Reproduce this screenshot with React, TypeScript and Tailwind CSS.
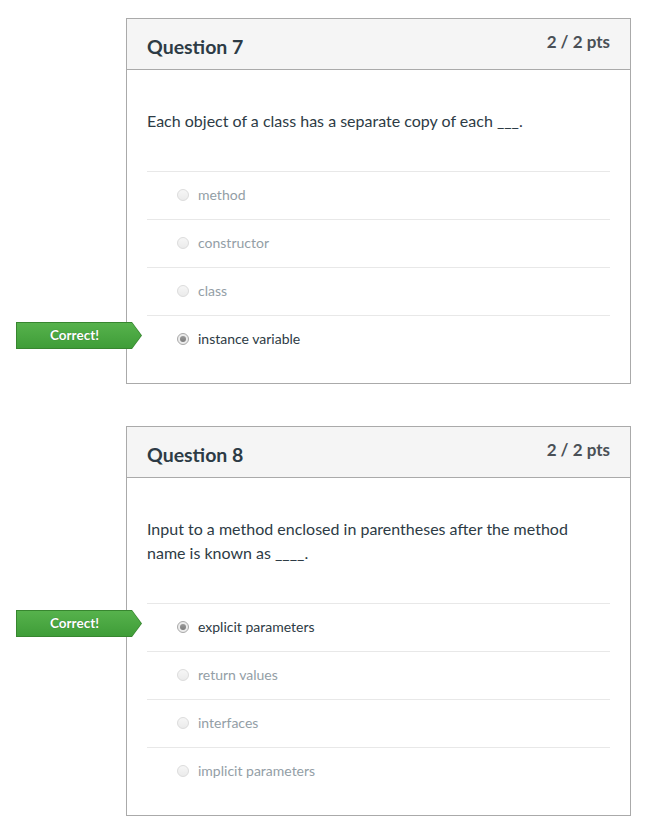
import React from 'react';

type Question = {
    number: number;
    text: string;
    answers: string[];
    selected: number;
};

const questions: Question[] = [
    {
        number: 7,
        text: 'Each object of a class has a separate copy of each ___.',
        answers: ['method', 'constructor', 'class', 'instance variable'],
        selected: 3
    },
    {
        number: 8,
        text: 'Input to a method enclosed in parentheses after the method name is known as ____.',
        answers: ['explicit parameters', 'return values', 'interfaces', 'implicit parameters'],
        selected: 0
    }
];

const Radio: React.FC<{ checked: boolean }> = ({ checked }) => (
    <span
        className={`flex h-[12px] w-[12px] shrink-0 items-center justify-center rounded-full border ${
            checked ? 'border-[#a9a9a9] bg-[#ececec]' : 'border-[#dcdcdc] bg-gradient-to-b from-[#f6f6f6] to-[#ebebeb]'
        }`}
    >
        {checked && <span className="h-[6px] w-[6px] rounded-full bg-gradient-to-b from-[#9a9a9a] to-[#7c7c7c]" />}
    </span>
);

// green "Correct!" flag that hangs off the left of the card
const CorrectArrow: React.FC = () => (
    <div className="absolute left-[-131px] top-[6px] h-[27px] w-[126px] bg-[#37862f] [clip-path:polygon(0_0,116px_0,126px_50%,116px_100%,0_100%)]">
        <div className="absolute inset-[1px] flex items-center justify-center bg-gradient-to-b from-[#56b24c] to-[#3f9d38] pr-[9px] [clip-path:polygon(0_0,115px_0,124px_50%,115px_100%,0_100%)]">
            <span className="text-[13.5px] font-bold text-white [text-shadow:0_0_1px_rgba(0,0,0,0.35)]">Correct!</span>
        </div>
    </div>
);

const QuestionCard: React.FC<{ q: Question }> = ({ q }) => (
    <div className="w-[505px] border border-[#aaaaaa] bg-white">
        {/* Header */}
        <div className="flex h-[51px] items-start justify-between border-b border-[#aaaaaa] bg-[#f5f5f5] px-5">
            <h2 className="mt-[14px] text-[19.5px] font-bold leading-[28px] text-[#2d3b45]">Question {q.number}</h2>
            <span className="mt-[11px] text-[17px] font-bold leading-[24px] text-[#4a5056]">2 / 2 pts</span>
        </div>

        {/* Body */}
        <div className="px-5 pb-5 pt-[39px]">
            <p className="mb-[38px] pr-10 text-[16px] leading-[24px] text-[#2d3b45]">{q.text}</p>
            <div>
                {q.answers.map((answer, index) => {
                    const checked = index === q.selected;
                    return (
                        <div key={index} className="relative flex h-[48px] items-center gap-[9px] border-t border-[#e8e8e8] pb-[2px] pl-[30px]">
                            {checked && <CorrectArrow />}
                            <Radio checked={checked} />
                            <span className={`text-[14px] ${checked ? 'text-[#2d3b45]' : 'text-[#939ea6]'}`}>{answer}</span>
                        </div>
                    );
                })}
            </div>
        </div>
    </div>
);

export default function App() {
    return (
        <div className="min-h-[826px] bg-white pl-[126px] pt-[18px] font-['Lato',sans-serif]">
            <div className="flex flex-col gap-[42px]">
                {questions.map((q) => (
                    <QuestionCard key={q.number} q={q} />
                ))}
            </div>
        </div>
    );
}
